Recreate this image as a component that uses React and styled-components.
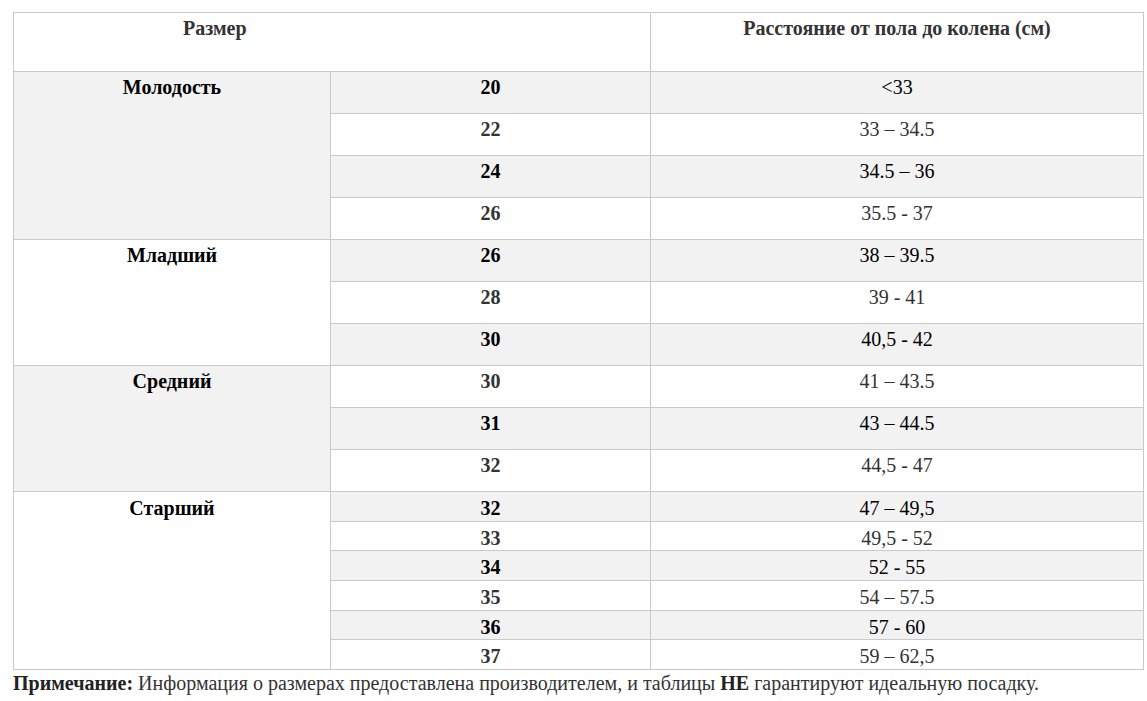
import React from 'react'
import styled, { createGlobalStyle } from 'styled-components'

const GlobalStyle = createGlobalStyle`
	body {
		margin: 0;
		background: #fff;
		font-family: "Liberation Serif", "Times New Roman", serif;
		font-size: 20px;
		line-height: 22px;
		color: #333;
	}
`

const Page = styled.div`
	padding: 12px 4px 0 13px;
`

const Table = styled.table`
	width: 1130px;
	border-collapse: collapse;
	table-layout: fixed;
	border: 1px solid #c9c9c9;
`

const HeadCell = styled.th`
	border: 1px solid #c9c9c9;
	padding: 4px 10px 32px ${p => p.$indent || 10}px;
	text-align: ${p => (p.$indent ? 'left' : 'center')};
	vertical-align: top;
	font-weight: bold;
	color: #333;
	background: #fff;
`

const Row = styled.tr`
	background: ${p => (p.$shaded ? '#f2f2f2' : '#fff')};
	color: ${p => (p.$shaded ? '#000' : '#333')};
`

const Cell = styled.td`
	border: 1px solid #c9c9c9;
	padding: ${p => (p.$compact ? '5px 10px 1.7px' : '4px 10px 15px')};
	text-align: center;
	vertical-align: top;
	font-weight: ${p => (p.$bold ? 'bold' : 'normal')};
`

const GroupCell = styled(Cell)`
	background: ${p => (p.$shaded ? '#f2f2f2' : '#fff')};
	color: #000;
	font-weight: bold;
`

const Note = styled.p`
	margin: 0;
	line-height: 27px;
	color: #333;
	b {
		color: #222;
	}
`

const groups = [
	{
		label: 'Молодость',
		shaded: true,
		rows: [
			['20', '<33'],
			['22', '33 – 34.5'],
			['24', '34.5 – 36'],
			['26', '35.5 - 37'],
		],
	},
	{
		label: 'Младший',
		shaded: false,
		rows: [
			['26', '38 – 39.5'],
			['28', '39 - 41'],
			['30', '40,5 - 42'],
		],
	},
	{
		label: 'Средний',
		shaded: true,
		rows: [
			['30', '41 – 43.5'],
			['31', '43 – 44.5'],
			['32', '44,5 - 47'],
		],
	},
	{
		label: 'Старший',
		shaded: false,
		compact: true,
		rows: [
			['32', '47 – 49,5'],
			['33', '49,5 - 52'],
			['34', '52 - 55'],
			['35', '54 – 57.5'],
			['36', '57 - 60'],
			['37', '59 – 62,5'],
		],
	},
]

export default function App() {
	let rowIndex = 0
	const body = []
	groups.forEach(group => {
		group.rows.forEach(([size, range], i) => {
			const shaded = rowIndex % 2 === 0
			rowIndex++
			body.push(
				<Row key={group.label + i} $shaded={shaded}>
					{i === 0 && (
						<GroupCell rowSpan={group.rows.length} $shaded={group.shaded} $compact={group.compact}>
							{group.label}
						</GroupCell>
					)}
					<Cell $bold $compact={group.compact}>{size}</Cell>
					<Cell $compact={group.compact}>{range}</Cell>
				</Row>
			)
		})
	})

	return (
		<Page>
			<GlobalStyle />
			<Table>
				<colgroup>
					<col style={{ width: 317 }} />
					<col style={{ width: 320 }} />
					<col style={{ width: 493 }} />
				</colgroup>
				<thead>
					<tr>
						<HeadCell colSpan={2} $indent={169}>Размер</HeadCell>
						<HeadCell>Расстояние от пола до колена (см)</HeadCell>
					</tr>
				</thead>
				<tbody>{body}</tbody>
			</Table>
			<Note>
				<b>Примечание:</b> Информация о размерах предоставлена производителем, и таблицы <b>НЕ</b> гарантируют идеальную посадку.
			</Note>
		</Page>
	)
}
